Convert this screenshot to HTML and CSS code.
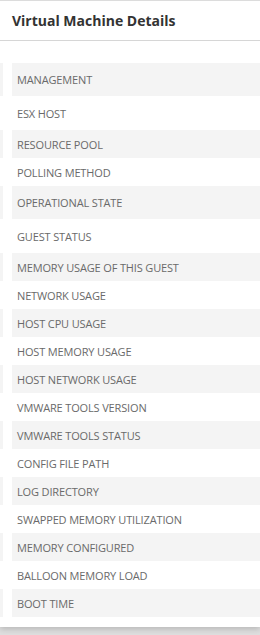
FILE: index.html
```html
<!DOCTYPE html>
<html lang="en">
  <head>
    <meta charset="UTF-8" />
    <title>Virtual Machine Details</title>
    <link rel="stylesheet" href="styles.css">
  </head>
  <body>
    <div class="card">
      <div class="card-header">
        <h2>Virtual Machine Details</h2>
      </div>

      <div class="details">
        <div class="row odd tall"><span class="stub"></span><span class="label">Management</span></div>
        <div class="row taller"><span class="stub"></span><span class="label">ESX Host</span></div>
        <div class="row odd"><span class="stub"></span><span class="label">Resource Pool</span></div>
        <div class="row"><span class="stub"></span><span class="label">Polling Method</span></div>
        <div class="row odd tall"><span class="stub"></span><span class="label">Operational State</span></div>
        <div class="row taller"><span class="stub"></span><span class="label">Guest Status</span></div>
        <div class="row odd"><span class="stub"></span><span class="label">Memory Usage of this Guest</span></div>
        <div class="row"><span class="stub"></span><span class="label">Network Usage</span></div>
        <div class="row odd"><span class="stub"></span><span class="label">Host CPU Usage</span></div>
        <div class="row"><span class="stub"></span><span class="label">Host Memory Usage</span></div>
        <div class="row odd"><span class="stub"></span><span class="label">Host Network Usage</span></div>
        <div class="row"><span class="stub"></span><span class="label">VMware Tools Version</span></div>
        <div class="row odd"><span class="stub"></span><span class="label">VMware Tools Status</span></div>
        <div class="row"><span class="stub"></span><span class="label">Config File Path</span></div>
        <div class="row odd"><span class="stub"></span><span class="label">Log Directory</span></div>
        <div class="row"><span class="stub"></span><span class="label">Swapped Memory Utilization</span></div>
        <div class="row odd"><span class="stub"></span><span class="label">Memory Configured</span></div>
        <div class="row"><span class="stub"></span><span class="label">Balloon Memory Load</span></div>
        <div class="row odd"><span class="stub"></span><span class="label">Boot Time</span></div>
      </div>
    </div>
  </body>
</html>
```

FILE: styles.css
```css
* {
  margin: 0;
  padding: 0;
  box-sizing: border-box;
}

body {
  font-family: "Open Sans", "Liberation Sans", sans-serif;
  background: #dedede;
  overflow: hidden;
  height: 635px;
}

.card {
  width: 100%;
  background: #ffffff;
  border-top: 1px solid #dcdcdc;
  box-shadow: 0 2px 6px rgba(0, 0, 0, 0.18);
  padding-bottom: 10px;
}

.card-header {
  height: 40px;
  border-bottom: 1px solid #d6d6d6;
  display: flex;
  align-items: center;
  padding-left: 12px;
}

.card-header h2 {
  font-size: 14px;
  font-weight: 700;
  color: #333333;
}

.details {
  padding-top: 22px;
}

.row {
  display: flex;
  height: 28px;
  gap: 9px;
}

.row.tall {
  height: 33px;
}

.row.taller {
  height: 34px;
}

.stub {
  width: 3px;
}

.label {
  flex: 1;
  display: flex;
  align-items: center;
  padding-left: 5px;
  font-size: 11px;
  letter-spacing: -0.15px;
  color: #6a6a6a;
  text-transform: uppercase;
}

.row.odd .stub,
.row.odd .label {
  background: #f4f4f4;
}
```
